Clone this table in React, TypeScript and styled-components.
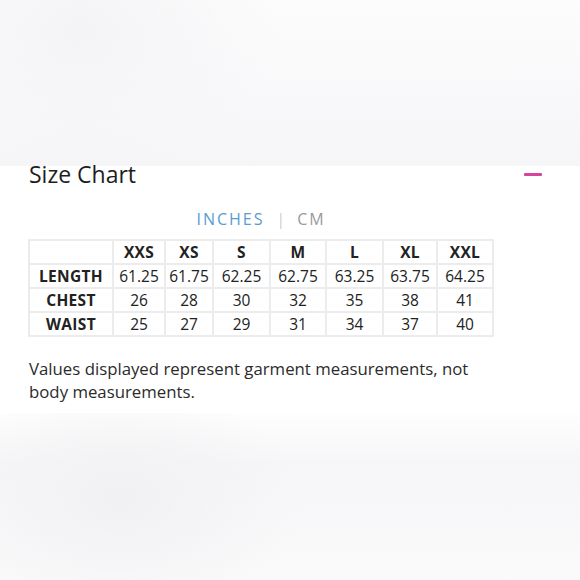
import styled, { createGlobalStyle } from 'styled-components'

const GlobalStyle = createGlobalStyle`
  html, body {
    margin: 0;
    padding: 0;
  }
  body {
    width: 580px;
    height: 580px;
    overflow: hidden;
    font-family: 'Liberation Sans', Arial, sans-serif;
    background:
      radial-gradient(ellipse 180px 120px at 120px 500px, #f1f1f3 0%, rgba(241, 241, 243, 0) 100%),
      radial-gradient(ellipse 200px 160px at 80px 30px, #f4f4f6 0%, rgba(244, 244, 246, 0) 100%),
      linear-gradient(180deg, #fcfcfd 0%, #f6f6f8 28%, #ffffff 45%, #ffffff 70%, #f6f6f8 80%, #fafafb 100%);
  }
`

const sizes = ['XXS', 'XS', 'S', 'M', 'L', 'XL', 'XXL']
const colWidths = [84, 52, 48, 57, 56, 57, 54, 56]

const rows = [
  { label: 'LENGTH', values: ['61.25', '61.75', '62.25', '62.75', '63.25', '63.75', '64.25'] },
  { label: 'CHEST', values: ['26', '28', '30', '32', '35', '38', '41'] },
  { label: 'WAIST', values: ['25', '27', '29', '31', '34', '37', '40'] },
]

export default function App(): JSX.Element {
  return (
    <>
      <GlobalStyle />
      <Page>
        <Backdrop />
        <Panel>
          <TitleRow>
            <Title>Size Chart</Title>
            <Collapse aria-label='collapse' />
          </TitleRow>
          <ChartArea>
            <UnitTabs>
              <UnitTab active>INCHES</UnitTab>
              <Divider>|</Divider>
              <UnitTab>CM</UnitTab>
            </UnitTabs>
            <SizeTable>
              <colgroup>
                {colWidths.map((w, i) => (
                  <col key={i} style={{ width: w }} />
                ))}
              </colgroup>
              <thead>
                <tr>
                  <HeadCell />
                  {sizes.map((s) => (
                    <HeadCell key={s}>{s}</HeadCell>
                  ))}
                </tr>
              </thead>
              <tbody>
                {rows.map((row) => (
                  <tr key={row.label}>
                    <HeadCell>{row.label}</HeadCell>
                    {row.values.map((v, i) => (
                      <Cell key={i}>{v}</Cell>
                    ))}
                  </tr>
                ))}
              </tbody>
            </SizeTable>
          </ChartArea>
          <Note>
            Values displayed represent garment measurements, not body
            measurements.
          </Note>
        </Panel>
      </Page>
    </>
  )
}

const Page = styled.div`
  display: flex;
  flex-direction: column;
  width: 580px;
  height: 580px;
`

const Backdrop = styled.div`
  height: 166px;
  flex-shrink: 0;
`

const Panel = styled.section`
  background: #ffffff;
  height: 247px;
  padding: 0 0 0 29px;
  box-sizing: border-box;
`

const TitleRow = styled.div`
  display: flex;
  align-items: center;
  justify-content: space-between;
  width: 513px;
  height: 17px;
`

const Title = styled.h2`
  margin: 0;
  font-family: 'Open Sans', sans-serif;
  font-size: 23px;
  font-weight: 400;
  line-height: 17px;
  color: #1e1e1e;
`

const Collapse = styled.span`
  display: block;
  width: 18px;
  height: 3px;
  border-radius: 1px;
  background: #d8449a;
`

const ChartArea = styled.div`
  display: flex;
  flex-direction: column;
  align-items: center;
  width: 464px;
  margin-top: 25px;
`

const UnitTabs = styled.div`
  display: flex;
  align-items: center;
  gap: 12px;
  height: 22px;
  margin-bottom: 9px;
  font-family: 'Open Sans', sans-serif;
  font-size: 16px;
  letter-spacing: 2px;
`

const UnitTab = styled.span<{ active?: boolean }>`
  color: ${(p) => (p.active ? '#5a9bd0' : '#9a9a9a')};
`

const Divider = styled.span`
  color: #b2b2b2;
  font-weight: 300;
  letter-spacing: 0;
`

const SizeTable = styled.table`
  border-collapse: collapse;
  table-layout: fixed;
  width: 464px;
  font-family: 'Open Sans', sans-serif;
  color: #222;
`

const HeadCell = styled.th`
  height: 22px;
  padding: 0;
  border: 2px solid #ececec;
  font-size: 15.5px;
  font-weight: 700;
  text-align: center;
  letter-spacing: 0.3px;
`

const Cell = styled.td`
  height: 22px;
  padding: 0;
  border: 2px solid #ececec;
  font-size: 15.5px;
  text-align: center;
`

const Note = styled.p`
  width: 478px;
  margin: 20px 0 0;
  font-family: 'Open Sans', sans-serif;
  font-size: 16.8px;
  line-height: 23px;
  color: #2b2b2b;
`
